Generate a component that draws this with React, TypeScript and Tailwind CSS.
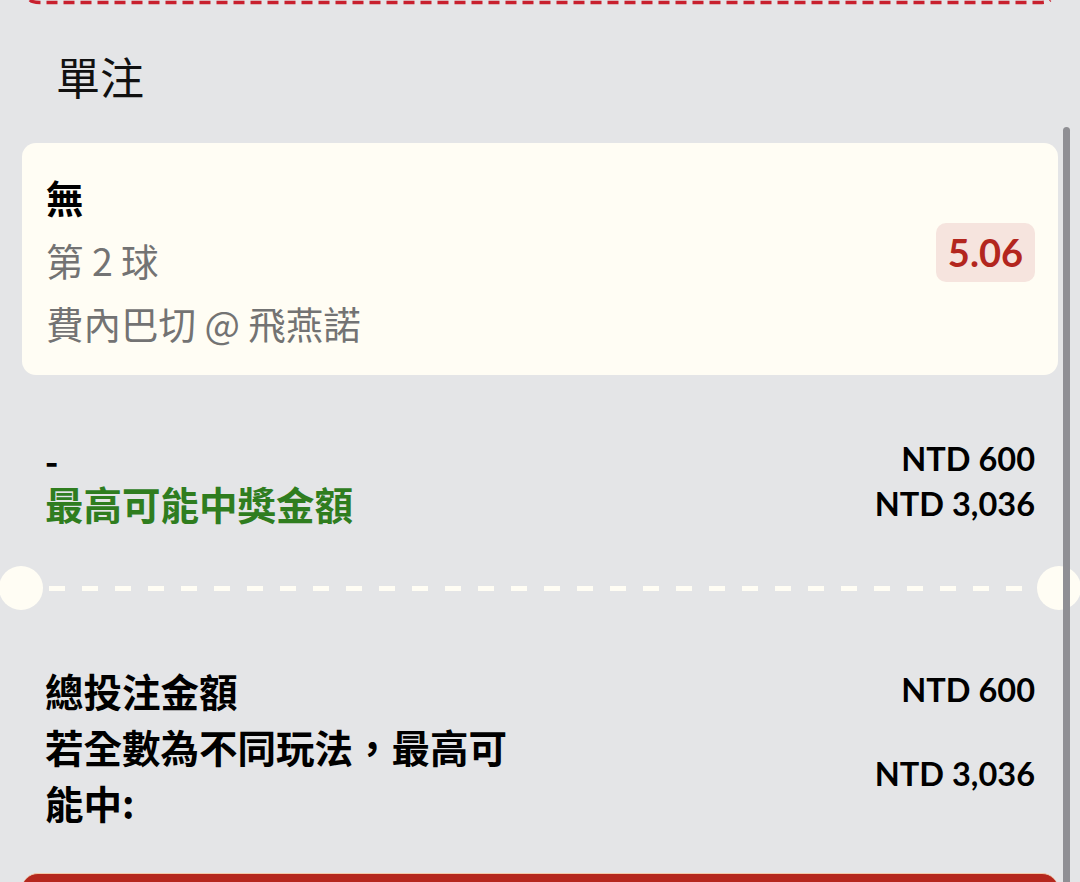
const cjk = "font-['Noto_Sans_CJK_TC','Noto_Sans',sans-serif]";
const latin = "font-['Lato','Noto_Sans_CJK_TC',sans-serif]";

const summary = [
    { label: "總投注金額", value: "NTD 600" },
];

export default function App() {
    return (
        <main className={`relative h-[882px] w-[1080px] overflow-hidden bg-[#e4e5e7] ${cjk}`}>

            {/* Previous slip edge */}
            <svg className="block h-[8px] w-full" viewBox="0 0 1080 8">
                <path
                    d="M30 0 Q32 2.5 40 2.5 L1040 2.5 Q1048 2.5 1050 0"
                    fill="none"
                    stroke="#c8202e"
                    strokeWidth="3.5"
                    strokeDasharray="11 6"
                />
            </svg>

            {/* Title */}
            <h1 className="mt-[38px] pl-[56px] text-[44px] leading-[60px] font-normal text-[#111]">
                單注
            </h1>

            {/* Selection card */}
            <section className="mx-[22px] mt-[37px] flex items-center justify-between rounded-[14px] bg-[#fffdf4] pt-[22px] pb-[21px] pr-[23px] pl-[24px]">
                <div className="text-[37.5px] leading-[63px]">
                    <p className="font-bold text-black">無</p>
                    <p className="text-[#737373]">第 2 球</p>
                    <p className="text-[#737373]">費內巴切 @ 飛燕諾</p>
                </div>
                <span className={`mb-[14px] rounded-[10px] bg-[#f6e4de] px-[12px] py-[6px] text-[38px] leading-[47px] font-bold text-[#b3261e] ${latin}`}>
                    5.06
                </span>
            </section>

            {/* Stake row */}
            <section className="mt-[61px] px-[45px] text-[38.5px] leading-[45px]">
                <div className="flex h-[45px] items-center justify-between">
                    <span className="text-[36px] leading-[36px] font-bold text-black">-</span>
                    <span className={`text-[32.5px] font-bold text-black ${latin}`}>NTD 600</span>
                </div>
                <div className="flex items-center justify-between">
                    <span className="font-bold text-[#2f7d1f]">最高可能中獎金額</span>
                    <span className={`text-[32.5px] font-bold text-black ${latin}`}>NTD 3,036</span>
                </div>
            </section>

            {/* Perforation */}
            <div className="mt-[40px] flex h-[44px] items-center">
                <div className="-ml-[1px] h-[44px] w-[44px] shrink-0 rounded-full bg-[#fffdf4]" />
                <div className="mx-[6px] h-[5px] flex-1 bg-[repeating-linear-gradient(90deg,#fffdf4_0px,#fffdf4_16px,transparent_16px,transparent_33px)]" />
                <div className="-mr-[1px] h-[44px] w-[44px] shrink-0 rounded-full bg-[#fffdf4]" />
            </div>

            {/* Totals */}
            <section className="mt-[52px] px-[45px] text-[38.5px] font-bold leading-[56px] text-black">
                {summary.map((row) => (
                    <div key={row.label} className="flex items-center justify-between">
                        <span>{row.label}</span>
                        <span className={`text-[32.5px] ${latin}`}>{row.value}</span>
                    </div>
                ))}
                <div className="flex items-center justify-between">
                    <p className="w-[475px]">若全數為不同玩法，最高可能中:</p>
                    <span className={`text-[32.5px] ${latin}`}>NTD 3,036</span>
                </div>
            </section>

            {/* Place bet button */}
            <button className="mx-[22px] mt-[43px] block h-[60px] w-[1036px] rounded-t-[16px] border-t border-[#f2c9a8] bg-[#b5271d]" />

            {/* Scrollbar */}
            <div className="absolute top-[127px] right-[10px] bottom-0 w-[7px] rounded-t-full bg-[#8f8f94]" />

        </main>
    );
}
